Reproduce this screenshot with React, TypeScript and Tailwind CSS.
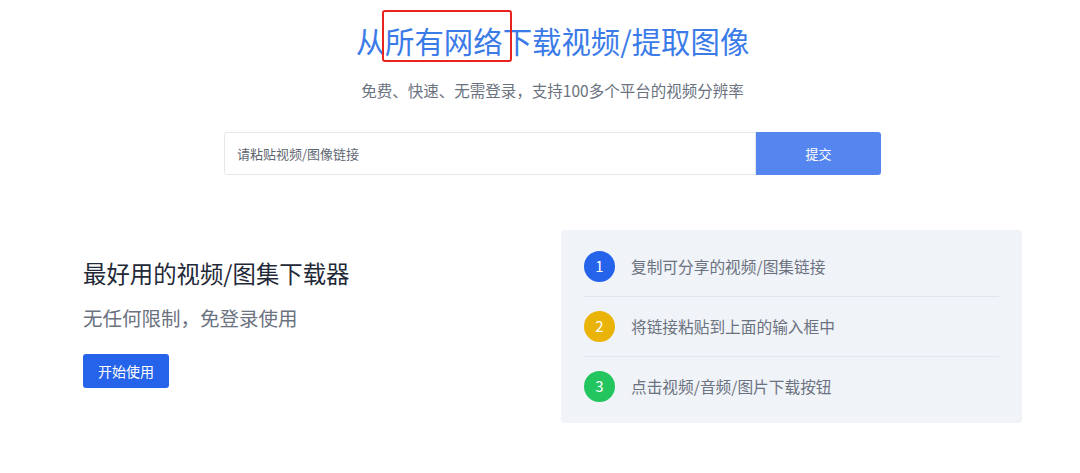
const font = { fontFamily: '"Noto Sans CJK SC", "Noto Sans", sans-serif' };

const steps = [
  { n: 1, text: "复制可分享的视频/图集链接", color: "bg-[#2563eb]" },
  { n: 2, text: "将链接粘贴到上面的输入框中", color: "bg-[#eab308]" },
  { n: 3, text: "点击视频/音频/图片下载按钮", color: "bg-[#22c55e]" },
];

export default function App() {
  return (
    <div className="min-h-[473px] w-full bg-white pl-[25px]" style={font}>
      <div className="mx-auto flex w-[939px] flex-col items-center pt-[20px]">
        <div className="relative">
          <h1 className="text-[29.4px] leading-[40px] font-normal text-[#3b7be8]">
            从所有网络下载视频/提取图像
          </h1>
          <div className="absolute top-[-10px] left-[26px] h-[52px] w-[130px] rounded-[3px] border-2 border-[#e8231f]" />
        </div>
        <p className="mt-[19px] text-[15.5px] leading-[22px] text-[#6b7280]">
          免费、快速、无需登录，支持100多个平台的视频分辨率
        </p>
        <div className="mt-[31px] flex h-[43px] w-[657px]">
          <input
            className="h-full flex-1 rounded-l-[3px] border border-[#e5e7eb] px-3 text-[13px] text-[#374151] outline-none placeholder:text-[#5f6673]"
            placeholder="请粘贴视频/图像链接"
            style={font}
          />
          <button className="h-full w-[125px] rounded-r-[3px] bg-[#5585ef] text-[13px] text-white">
            提交
          </button>
        </div>

        <div className="mt-[55px] flex w-full items-center justify-between">
          <div className="flex flex-col items-start pb-[8px]">
            <h2 className="text-[23.4px] leading-[32px] text-[#1f2937]">最好用的视频/图集下载器</h2>
            <p className="mt-[15px] text-[19.5px] leading-[28px] text-[#6b7280]">无任何限制，免登录使用</p>
            <button className="mt-[22px] h-[34px] w-[86px] rounded-[3px] bg-[#2563eb] text-[14px] text-white">
              开始使用
            </button>
          </div>
          <div className="w-[461px] rounded-[4px] bg-[#f0f3f8] px-[23px] py-[7px]">
            {steps.map((s, i) => (
              <div
                key={s.n}
                className={
                  "flex items-center gap-[16px] py-[14px] " +
                  (i < steps.length - 1 ? "border-b border-[#dfe5ee]" : "")
                }
              >
                <div
                  className={
                    "flex h-[31px] w-[31px] items-center justify-center rounded-full text-[15px] text-white " + s.color
                  }
                >
                  {s.n}
                </div>
                <span className="text-[15.7px] text-[#6b7280]">{s.text}</span>
              </div>
            ))}
          </div>
        </div>
      </div>
    </div>
  );
}
